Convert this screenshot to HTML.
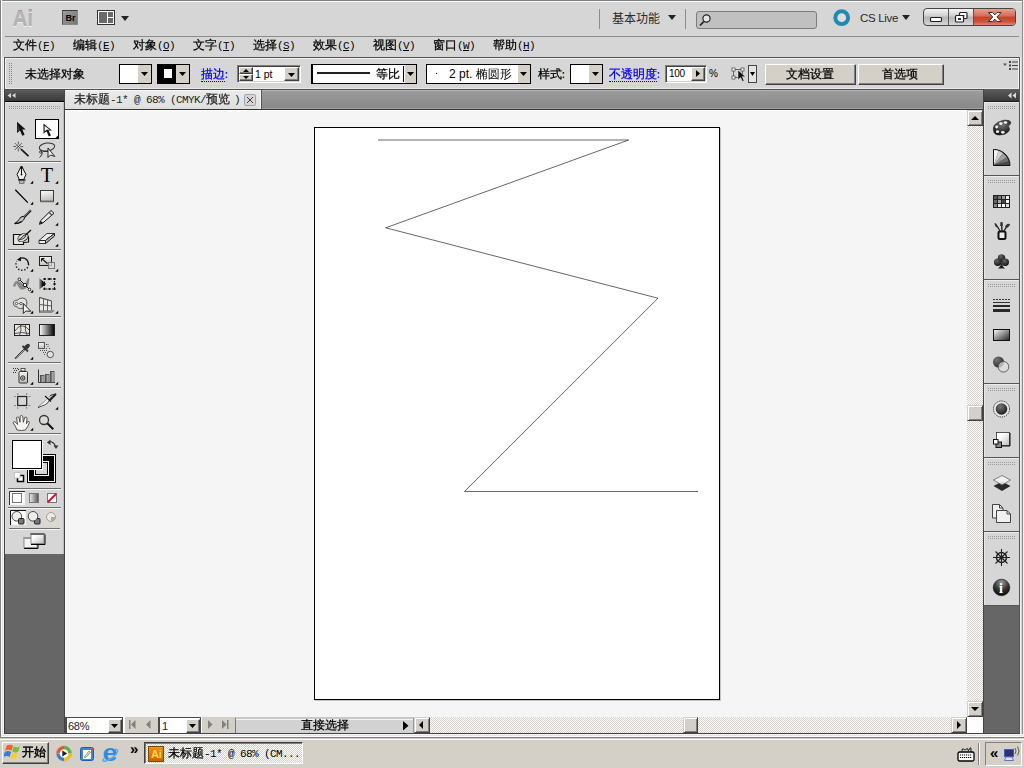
<!DOCTYPE html>
<html><head><meta charset="utf-8">
<style>
*{box-sizing:border-box;margin:0;padding:0}
html,body{width:1024px;height:768px;overflow:hidden}
body{position:relative;background:#d6d6d6;font-family:"Liberation Sans","WenQuanYi Zen Hei","Noto Sans CJK SC",sans-serif;font-size:12px;color:#000}
.a{position:absolute}
.t{position:absolute;white-space:nowrap;line-height:14px}
.cj{font-family:"Liberation Sans","WenQuanYi Zen Hei","Noto Sans CJK SC",sans-serif;font-size:12px}

.sbt{background-color:#fff;background-image:conic-gradient(#d4d0c8 25%,#fff 0 50%,#d4d0c8 0 75%,#fff 0);background-size:2px 2px}
.sbb{background:#d4d0c8;border:1px solid;border-color:#d4d0c8 #404040 #404040 #d4d0c8;box-shadow:inset 1px 1px 0 #fff,inset -1px -1px 0 #808080}

.s{font-family:"Liberation Mono","WenQuanYi Zen Hei","Noto Sans CJK SC",monospace;font-size:12px;line-height:14px;-webkit-text-stroke:0.25px}
.l{font-size:11px;letter-spacing:-0.6px;-webkit-text-stroke:0}
.u{text-decoration:underline}
.blue{color:#0000e0}.blue b{font-weight:normal;display:inline-block;line-height:12px;border-bottom:1px dotted #0000e0}.c{margin-left:-2px}
.sunk{border:1px solid;border-color:#808080 #fff #fff #808080;box-shadow:inset 1px 1px 0 #404040,inset -1px -1px 0 #d4d0c8;background:#fff}
.btn{background:#d4d0c8;border:1px solid;border-color:#fff #404040 #404040 #fff;box-shadow:inset -1px -1px 0 #808080}
</style></head><body>
<!-- window frame -->
<div class="a" style="left:0;top:0;width:1024px;height:2px;background:#fff;border-top:1px solid #808080"></div>
<div class="a" style="left:0;top:0;width:2px;height:737px;background:#fff;border-left:1px solid #808080"></div>
<div class="a" style="left:1022px;top:0;width:2px;height:737px;background:#f0f0f0;border-left:1px solid #8e8e8e"></div><div class="a" style="left:1020px;top:57px;width:1px;height:677px;background:#f0f0f0"></div>
<div class="a" style="left:5px;top:36px;width:1014px;height:1px;background:#8c8c8c"></div>
<div class="a" style="left:3px;top:57px;width:1px;height:677px;background:#f6f6f6"></div><div class="a" style="left:2px;top:57px;width:1px;height:680px;background:#dedede"></div>
<!-- app bar -->

<div class="t" style="left:13px;top:6.200px;font-size:22.500px;line-height:26px;font-weight:bold;color:#b4b4b4;letter-spacing:0.3px;transform:scaleX(.87);transform-origin:0 0;text-shadow:0 1px 0 #f0f0f0,0 -1px 0 #9a9a9a">Ai</div>
<div class="a" style="left:62px;top:10px;width:16px;height:15px;background:linear-gradient(135deg,#9c9c9c,#767676);border:1px solid #8a8a8a;border-top-color:#3c3c3c;border-left-color:#555"></div>
<div class="t" style="left:65.500px;top:12px;font-size:9px;line-height:13px;font-weight:bold;color:#000">Br</div>
<svg class="a" style="left:97px;top:10px" width="18" height="15"><rect x="0.5" y="0.5" width="17" height="14" fill="#fff" stroke="#333"/><rect x="2" y="2" width="8" height="11" fill="#6a6a6a"/><rect x="11" y="2" width="5" height="5" fill="#6a6a6a"/><rect x="11" y="8" width="5" height="5" fill="#6a6a6a"/></svg>
<svg class="a" style="left:120.500px;top:16px" width="8" height="5"><path d="M0 0h8l-4 5z" fill="#222"/></svg>
<div class="a" style="left:599px;top:9px;width:1px;height:20px;background:#8c8c8c"></div>
<div class="t" style="left:612px;top:11px;font-size:12px;line-height:16px;color:#2a2a2a;font-family:'Liberation Sans','Noto Sans CJK SC',sans-serif">基本功能</div>
<svg class="a" style="left:668px;top:15px" width="8" height="5"><path d="M0 0h8l-4 5z" fill="#222"/></svg>
<div class="a" style="left:685px;top:9px;width:1px;height:20px;background:#8c8c8c"></div>
<div class="a" style="left:696px;top:11px;width:121px;height:18px;background:#c0c0c0;border:1px solid #7c7c7c;border-radius:3px"></div>
<svg class="a" style="left:698px;top:12px" width="16" height="16"><circle cx="8.5" cy="6.5" r="3.6" fill="#e4e4e4" stroke="#222" stroke-width="1.2"/><path d="M5.8 9.5L2 13.5" stroke="#222" stroke-width="1.8"/></svg>
<svg class="a" style="left:833px;top:9px" width="18" height="18"><circle cx="8.7" cy="8.7" r="6.4" fill="#dedede" stroke="#1f8bb0" stroke-width="4"/></svg>
<div class="t" style="left:860px;top:9.700px;font-size:11.500px;line-height:16px;color:#2a2a2a;letter-spacing:-0.3px">CS Live</div>
<svg class="a" style="left:902px;top:15px" width="8" height="5"><path d="M0 0h8l-4 5z" fill="#222"/></svg>
<!-- window buttons -->
<div class="a" style="left:923px;top:8px;width:93px;height:18px;border:1px solid #444;border-radius:4px;background:linear-gradient(#f4f4f4,#cfcfcf 45%,#b4b4b4 50%,#d8d8d8);overflow:hidden">
 <div class="a" style="left:24px;top:0;width:1px;height:16px;background:#555"></div>
 <div class="a" style="left:49px;top:0;width:1px;height:16px;background:#555"></div>
 <div class="a" style="left:50px;top:0;width:42px;height:16px;background:linear-gradient(#e8a090,#d46a58 45%,#c4432c 50%,#d0503a 80%,#e08878)"></div>
 <svg class="a" style="left:0;top:0" width="91" height="16">
  <rect x="6.500" y="8.500" width="11" height="4" rx="1" fill="#fff" stroke="#222" stroke-width="1.200"/>
  <rect x="35.500" y="3.500" width="7.500" height="6" rx="1" fill="#fff" stroke="#222" stroke-width="1.200"/><rect x="38.500" y="6" width="2" height="1.500" fill="#333"/>
  <rect x="31.500" y="6.500" width="8" height="6.500" rx="1" fill="#fff" stroke="#222" stroke-width="1.200"/><rect x="34" y="9" width="3" height="2" fill="#333"/>
  <path d="M66 4.500l4.500 3.500l4.500-3.500h0l0 0M66 12.500l4.500-3.500l4.500 3.500" fill="none"/>
  <path d="M64.500 3.500h4l2.300 2.300l2.300-2.300h4l-4.200 4.500l4.200 4.500h-4l-2.300-2.300l-2.300 2.300h-4l4.200-4.500z" fill="#fff" stroke="#333" stroke-width="1"/>
 </svg>
</div>

<!-- menu -->
<div class="t s" style="left:13px;top:39px">文件<span class="l">(<span class="u">F</span>)</span></div>
<div class="t s" style="left:73px;top:39px">编辑<span class="l">(<span class="u">E</span>)</span></div>
<div class="t s" style="left:133px;top:39px">对象<span class="l">(<span class="u">O</span>)</span></div>
<div class="t s" style="left:193px;top:39px">文字<span class="l">(<span class="u">T</span>)</span></div>
<div class="t s" style="left:253px;top:39px">选择<span class="l">(<span class="u">S</span>)</span></div>
<div class="t s" style="left:313px;top:39px">效果<span class="l">(<span class="u">C</span>)</span></div>
<div class="t s" style="left:373px;top:39px">视图<span class="l">(<span class="u">V</span>)</span></div>
<div class="t s" style="left:433px;top:39px">窗口<span class="l">(<span class="u">W</span>)</span></div>
<div class="t s" style="left:493px;top:39px">帮助<span class="l">(<span class="u">H</span>)</span></div>

<!-- control bar -->
<div class="a" style="left:4px;top:57px;width:1016px;height:32px;border:1px solid #555;border-bottom:none;background:#d6d6d6;box-shadow:inset 1px 1px 0 #f2f2f2,inset -1px 0 0 #f2f2f2,inset 0 -1px 0 #e8e8e8"></div>

<div class="a" style="left:9px;top:63px;width:3px;height:21px;background-image:radial-gradient(circle at 0.5px 0.5px,#8a8a8a 0.6px,transparent 0.7px);background-size:2px 2px"></div>
<div class="t s" style="left:25px;top:68px">未选择对象</div>
<!-- fill -->
<div class="a" style="left:119px;top:64px;width:33px;height:20px;border:1px solid #000;background:#fff"></div>
<div class="a" style="left:138px;top:65px;width:13px;height:18px;background:#d4d0c8"></div>
<svg class="a" style="left:141px;top:72px" width="7" height="4"><path d="M0 0h7l-3.500 4z" fill="#000"/></svg>
<!-- stroke -->
<div class="a" style="left:157px;top:64px;width:33px;height:20px;border:1px solid #000;background:#000"></div>
<div class="a" style="left:164px;top:69px;width:8px;height:9px;background:#fff"></div>
<div class="a" style="left:176px;top:65px;width:13px;height:18px;background:#d4d0c8"></div>
<svg class="a" style="left:179px;top:72px" width="7" height="4"><path d="M0 0h7l-3.500 4z" fill="#000"/></svg>
<div class="t s blue" style="left:201px;top:68px"><b>描边</b><span class="l c">:</span></div>
<div class="a sunk" style="left:237px;top:65px;width:64px;height:18px"></div>
<div class="a btn" style="left:239px;top:67px;width:14px;height:7px"></div>
<div class="a btn" style="left:239px;top:74px;width:14px;height:7px"></div>
<svg class="a" style="left:243px;top:69px" width="6" height="3"><path d="M0 3h6l-3-3z" fill="#000"/></svg>
<svg class="a" style="left:243px;top:76px" width="6" height="3"><path d="M0 0h6l-3 3z" fill="#000"/></svg>
<div class="t" style="left:255px;top:67px;font-size:10.500px">1 pt</div>
<div class="a btn" style="left:284px;top:67px;width:15px;height:14px"></div>
<svg class="a" style="left:288px;top:73px" width="7" height="4"><path d="M0 0h7l-3.500 4z" fill="#000"/></svg>
<!-- profile -->
<div class="a" style="left:311px;top:64px;width:106px;height:20px;border:1px solid #000;border-left-width:2px;background:#fff"></div>
<div class="a" style="left:317px;top:72px;width:53px;height:2px;background:#222"></div>
<div class="t s" style="left:376px;top:68px">等比</div>
<div class="a" style="left:403px;top:66px;width:1px;height:16px;background:#000"></div>
<div class="a" style="left:405px;top:65px;width:11px;height:18px;background:#d4d0c8"></div>
<svg class="a" style="left:407px;top:72px" width="7" height="4"><path d="M0 0h7l-3.500 4z" fill="#000"/></svg>
<!-- brush -->
<div class="a" style="left:426px;top:64px;width:105px;height:20px;border:1px solid #000;background:#fff"></div>
<div class="a" style="left:436px;top:73px;width:1px;height:1px;background:#000"></div>
<div class="t" style="left:449px;top:67px;font-size:12px;font-family:'Liberation Sans','WenQuanYi Zen Hei',sans-serif">2 pt. 椭圆形</div>
<div class="a" style="left:518px;top:65px;width:12px;height:18px;background:#d4d0c8"></div>
<svg class="a" style="left:520px;top:72px" width="7" height="4"><path d="M0 0h7l-3.500 4z" fill="#000"/></svg>
<div class="t s" style="left:538px;top:68px">样式<span class="l c">:</span></div>
<div class="a" style="left:570px;top:64px;width:33px;height:20px;border:1px solid #000;background:#fff"></div>
<div class="a" style="left:589px;top:65px;width:13px;height:18px;background:#d4d0c8"></div>
<svg class="a" style="left:592px;top:72px" width="7" height="4"><path d="M0 0h7l-3.500 4z" fill="#000"/></svg>
<div class="t s blue" style="left:609px;top:68px"><b>不透明度</b><span class="l c">:</span></div>
<div class="a sunk" style="left:665px;top:65px;width:42px;height:18px"></div>
<div class="t" style="left:669px;top:67px;font-size:10px;letter-spacing:-0.3px">100</div>
<div class="a btn" style="left:691px;top:67px;width:14px;height:14px"></div>
<svg class="a" style="left:696px;top:70px" width="4" height="7"><path d="M0 0v7l4-3.500z" fill="#000"/></svg>
<div class="t" style="left:709px;top:67px;font-size:10px">%</div>
<svg class="a" style="left:730px;top:65px" width="18" height="18"><rect x="3.500" y="4.500" width="9" height="8" fill="none" stroke="#666"/><g fill="#fff" stroke="#555" stroke-width="0.8"><rect x="2" y="3" width="3" height="3"/><rect x="11" y="3" width="3" height="3"/><rect x="2" y="11" width="3" height="3"/></g><path d="M8 5v10l2.500-2.500l2 4l1.600-0.800l-2-4h3.400z" fill="#111" stroke="#eee" stroke-width="0.5"/></svg>
<div class="a" style="left:748px;top:65px;width:9px;height:18px;border:1px solid #444;background:#e4e4e4"></div>
<svg class="a" style="left:750px;top:72px" width="5" height="4"><path d="M0 0h5l-2.500 4z" fill="#000"/></svg>
<div class="a btn" style="left:765px;top:64px;width:91px;height:21px"></div>
<div class="t s" style="left:786px;top:68px">文档设置</div>
<div class="a btn" style="left:858px;top:64px;width:86px;height:21px"></div>
<div class="t s" style="left:882px;top:68px">首选项</div>
<svg class="a" style="left:1003px;top:61px" width="15" height="9"><path d="M0 2.500h4l-2 2.500z" fill="#555"/><g fill="#444"><rect x="6" y="0" width="2" height="2"/><rect x="9" y="0.500" width="6" height="1"/><rect x="6" y="3.500" width="2" height="2"/><rect x="9" y="4" width="6" height="1"/><rect x="6" y="7" width="2" height="2"/><rect x="9" y="7.500" width="6" height="1"/></g></svg>

<!-- workspace dark bg -->
<div class="a" style="left:4px;top:89px;width:1016px;height:645px;background:#666"></div>
<!-- tool panel -->
<!--TOOLS--><svg class="a" style="left:0;top:0" width="70" height="740" viewBox="0 0 70 740"><defs>
<linearGradient id="hd" x1="0" y1="0" x2="0" y2="1"><stop offset="0" stop-color="#5e5e5e"/><stop offset="1" stop-color="#3a3a3a"/></linearGradient>
<linearGradient id="rg" x1="0" y1="0" x2="0.300" y2="1"><stop offset="0" stop-color="#fff"/><stop offset="1" stop-color="#c4c2bc"/></linearGradient>
<linearGradient id="bw" x1="0" y1="0" x2="1" y2="0"><stop offset="0" stop-color="#fff"/><stop offset="1" stop-color="#000"/></linearGradient>
<linearGradient id="wg" x1="0" y1="0" x2="1" y2="0"><stop offset="0" stop-color="#eee"/><stop offset="1" stop-color="#555"/></linearGradient>
<linearGradient id="gb" x1="0" y1="0" x2="1" y2="0"><stop offset="0" stop-color="#555"/><stop offset="1" stop-color="#ddd"/></linearGradient>
<linearGradient id="ag" x1="0" y1="0" x2="1" y2="0"><stop offset="0" stop-color="#999"/><stop offset=".5" stop-color="#111"/></linearGradient>
<pattern id="dots" x="9" y="106" width="2" height="2" patternUnits="userSpaceOnUse"><rect x="0" y="0" width="1" height="1" fill="#9a9a9a"/></pattern>
</defs>
<rect x="4" y="89" width="1" height="645" fill="#3c3c3c"/>
<rect x="5" y="89" width="59" height="12" fill="url(#hd)"/><rect x="5" y="101" width="59" height="1" fill="#000"/>
<rect x="5" y="102" width="59" height="452" fill="#d6d6d6"/><rect x="5" y="102" width="59" height="1" fill="#e6e6e6"/><rect x="5" y="102" width="1" height="452" fill="#e2e2e2"/><rect x="63" y="102" width="1" height="452" fill="#bdbdbd"/>
<rect x="64" y="89" width="1" height="645" fill="#444"/>
<path d="M11 93v5l-3.500-2.500zM15.500 93v5l-3.500-2.500z" fill="#d8d8d8"/>
<rect x="9" y="106" width="52" height="4" fill="url(#dots)"/>
<path d="M17 121.800V133l3-2.600l2.300 5.400l2.300-1l-2.300-5.300h3.400z" fill="#111"/><path d="M17.600 123.500v8l2-1.800z" fill="#666" opacity=".6"/>
<rect x="35.500" y="119.500" width="23" height="19" fill="#fff" stroke="#000"/><path d="M58 135.500v2.500h-2.500z" fill="#000"/>
<path d="M43.500 123.400V133.800l3-2.600l2.300 5.300l2.100-0.900l-2.300-5.200h3.400z" fill="#111"/><path d="M44.600 125.800v5.600l1.900-1.700h3.300z" fill="#f4f2ee"/>
<g stroke="#555" stroke-width="0.9"><path d="M18.300 141.500v10M13.300 146.500h10M14.800 143l7 7M21.800 143l-7 7"/></g><circle cx="18.300" cy="146.500" r="2.300" fill="#eee" stroke="#777" stroke-width=".5"/><path d="M17 145.200l2.600 2.600M19.600 145.200l-2.600 2.600" stroke="#111" stroke-width=".9"/><path d="M21 149.200l7.500 7" stroke="#111" stroke-width="1.600"/>
<ellipse cx="47" cy="147" rx="7.800" ry="4" fill="none" stroke="#333" stroke-width="1" transform="rotate(-8 47 147)"/><path d="M40 150.500q3 1 2 3.500t-2.500 3.500" fill="none" stroke="#333" stroke-width="1"/><circle cx="40.800" cy="152" r="1.300" fill="none" stroke="#333" stroke-width=".8"/><path d="M43 151.500h5" stroke="#333" stroke-width="1"/><path d="M48 148v9.500l2.500-2.500l4.300 1.500z" fill="#f4f2ee" stroke="#111" stroke-width=".9"/>
<rect x="8" y="161" width="53" height="1" fill="#6e6e6e"/><rect x="8" y="162" width="53" height="1" fill="#f4f4f4"/>
<path d="M21.500 166l4.500 8.500l-2.300 5h-4.400l-2.300-5z" fill="#f0eeea" stroke="#111" stroke-width="1"/><path d="M21.500 166.500v7.500" stroke="#111" stroke-width="1"/><path d="M20.500 166.500h2l.8 2h-3.600z" fill="#111"/><circle cx="21.500" cy="174.500" r=".9" fill="#111"/><rect x="18" y="179.300" width="7.500" height="1.300" fill="#111"/><rect x="19.300" y="180.600" width="4.700" height="2.600" fill="#bbb" stroke="#333" stroke-width=".6"/><path d="M33.2 180.8v3h-3z" fill="#000"/>
<text x="40.800" y="181.800" font-family="Liberation Serif,serif" font-size="20" fill="#000" textLength="12.300" lengthAdjust="spacingAndGlyphs">T</text><path d="M58.2 180.8v3h-3z" fill="#000"/>
<path d="M15.300 189.800l12.500 12.800" stroke="#000" stroke-width="1.300"/><path d="M33.2 201.8v3h-3z" fill="#000"/>
<rect x="40.500" y="190.500" width="13" height="10.700" fill="url(#rg)" stroke="#3a3a3a"/><rect x="40" y="202" width="14" height="1" fill="#aaa" opacity=".6"/><path d="M58.2 201.8v3h-3z" fill="#000"/>
<path d="M30.800 210.200l-7.800 8" stroke="#111" stroke-width="2.300"/><path d="M30.300 210.200l-7.300 7.500" stroke="#e8e8e8" stroke-width=".7"/><path d="M23.300 216.300q2.700 2-1.300 5.200q-3.500 2.500-7.500 2q3-1.500 4.500-4q2-3.500 4.300-3.200z" fill="#c4c4c4" stroke="#111" stroke-width="1"/><path d="M21.500 221.500q-3 2.200-6.500 2" stroke="#111" stroke-width="1.300" fill="none"/>
<path d="M51 210.500l3 2.800l-11 9.500l-3.500 1.500l1-3.500z" fill="#eeece8" stroke="#111" stroke-width="1"/><path d="M49 212.300l3 3" stroke="#555" stroke-width="1.500"/><path d="M39.500 224.300l1-3.500l2.500 2z" fill="#222"/><path d="M58.2 222.8v3h-3z" fill="#000"/>
<path d="M13.500 234.500h9l6 2.500v5l-5 .5v2h-10z" fill="#e8e6e2" stroke="#111" stroke-width="1.200"/><ellipse cx="23" cy="237.500" rx="5.500" ry="3.500" fill="#e2e0dc" stroke="#222" stroke-width=".9" transform="rotate(-30 23 237.500)"/><path d="M31 230l-6 5.500" stroke="#111" stroke-width="1.300"/><path d="M25.500 235q1.500 1.500-2 3.500q-2.500 1.500-4.500 1q2-1 3.200-2.800q1.500-2 3.300-1.700z" fill="#aaa" stroke="#222" stroke-width=".8"/>
<path d="M47 233.500h7.500l-9 7h-6.500zM39 240.500h6.500v3h-6.500zM45.500 240.500l9-7v2.500l-9 7.500z" fill="#f0eeea" stroke="#222" stroke-width=".9" stroke-linejoin="round"/><path d="M45.500 240.500l9-7v2.500l-9 7.500z" fill="#bbb" stroke="#222" stroke-width=".9"/><path d="M58.2 243.8v3h-3z" fill="#000"/>
<rect x="8" y="249" width="53" height="1" fill="#6e6e6e"/><rect x="8" y="250" width="53" height="1" fill="#f4f4f4"/>
<path d="M19.500 258.500a6.300 6.300 0 0 1 9 5.500" fill="none" stroke="#111" stroke-width="1.300"/><path d="M28.500 264a6.300 6.300 0 1 1-11.800-3" fill="none" stroke="#111" stroke-width="1.500" stroke-dasharray="1.300 1.900"/><path d="M16.800 259.800l4.200-2.800v4.200z" fill="#111"/><path d="M33.2 268.8v3h-3z" fill="#000"/>
<rect x="39.500" y="256.500" width="12" height="9" fill="url(#rg)" stroke="#222"/><rect x="48.500" y="262.500" width="6" height="6" fill="#ddd" fill-opacity=".7" stroke="#777"/><path d="M41.500 258.500l6 5M41.500 258.500h3M41.500 258.500v3" stroke="#111" stroke-width="1.100" fill="none"/><path d="M58.2 268.8v3h-3z" fill="#000"/>
<path d="M13.500 286q1-6 5-4.500t5 4t4-6q1.500-2 1.500-.5q-.5 9-5 10t-6-3.500t-3 1z" fill="#888" stroke="#777" stroke-width=".5"/><path d="M19.500 279.500l11 11" stroke="#111" stroke-width="1"/><circle cx="19.300" cy="279.300" r="1.300" fill="#eee" stroke="#111" stroke-width=".8"/><circle cx="25" cy="285" r="1.700" fill="#fff" stroke="#111" stroke-width=".9"/><circle cx="29.500" cy="289.500" r="1.300" fill="#eee" stroke="#111" stroke-width=".8"/><path d="M33.2 289.8v3h-3z" fill="#000"/>
<path d="M39.200 278v11.500l7-5.500z" fill="url(#ag)"/><rect x="44.500" y="279" width="10" height="10" fill="none" stroke="#111" stroke-width="1" stroke-dasharray="1.500 1.500"/><g fill="#111"><rect x="43.500" y="278" width="2" height="2"/><rect x="48.500" y="278" width="2" height="2"/><rect x="53.500" y="278" width="2" height="2"/><rect x="53.500" y="283" width="2" height="2"/><rect x="43.500" y="288" width="2" height="2"/><rect x="48.500" y="288" width="2" height="2"/><rect x="53.500" y="288" width="2" height="2"/></g>
<path d="M13.300 303.500q0-3.500 4.500-3.500q1.500-2.300 5-2t4 3.500q.5 3-1 5t-5.500 2q-2 0-3-1.500q-4-.5-4-3.500z" fill="#e4e2de" stroke="#555" stroke-width="1"/><circle cx="16.500" cy="303.500" r="1.200" fill="#fff" stroke="#222" stroke-width=".7"/><circle cx="21" cy="303.500" r="1.200" fill="#fff" stroke="#222" stroke-width=".7"/><path d="M17.700 303.500h2" stroke="#222" stroke-width=".7" stroke-dasharray=".7 .7"/><path d="M23.300 303.500v10l2.500-2.500l5 .3z" fill="#f6f4f0" stroke="#111" stroke-width=".9"/><path d="M33.2 310.8v3h-3z" fill="#000"/>
<path d="M39.500 297v15.500M39.500 297.500l12 3.500v9M43.500 298.500v12.500M47.500 300v11M39.500 304.500l12 1.500M39.500 311l14 0" fill="none" stroke="#555" stroke-width="1"/><path d="M40 298l11 3.300v9.200l-11 .3z" fill="#efede9" opacity=".8"/><path d="M39.500 297v15.500M43.500 298.500v12.500M47.500 300v11M39.500 304.500l12 1.500M39.500 297.500l12 3.500v9" fill="none" stroke="#555" stroke-width=".9"/><path d="M39.500 311h15M39.500 312.500h13" stroke="#777" stroke-width=".8"/><path d="M58.2 310.8v3h-3z" fill="#000"/>
<rect x="8" y="316" width="53" height="1" fill="#6e6e6e"/><rect x="8" y="317" width="53" height="1" fill="#f4f4f4"/>
<rect x="14.500" y="324.500" width="15" height="11" fill="#e8e6e0" stroke="#222"/><path d="M15 331q4-6 8-5t6 4M20.500 325q1.500 5-1 10.500M25.500 325q-1 5 1.500 10M15 333.500q6-2 14 0" fill="none" stroke="#333" stroke-width=".8"/>
<rect x="39.500" y="324.500" width="15" height="11" fill="url(#bw)" stroke="#222"/>
<path d="M26.500 344.500q2-1.500 3 0t-.5 3l-2 2l-3-3z" fill="#333"/><path d="M22.500 346l5.500 5.500" stroke="#333" stroke-width="1.800"/><path d="M24 349l-7.500 7.500l-1.500 2l2-1l7.800-7.500z" fill="#e8e6e2" stroke="#222" stroke-width=".9"/><path d="M33.2 356.8v3h-3z" fill="#000"/>
<rect x="38.500" y="342.500" width="6" height="6" fill="url(#rg)" stroke="#555"/><circle cx="50.300" cy="354.500" r="3.200" fill="#e4e2de" stroke="#444" stroke-width=".9"/><g fill="#555"><rect x="46" y="344" width="1" height="1"/><rect x="47.500" y="346" width="1" height="1"/><rect x="46" y="348" width="1" height="1"/><rect x="49" y="348" width="1" height="1"/><rect x="44" y="350" width="1" height="1"/><rect x="46" y="350" width="1" height="1"/><rect x="40" y="350" width="1" height="1"/><rect x="42" y="350" width="1" height="1"/><rect x="43" y="352" width="1" height="1"/><rect x="45" y="352" width="1" height="1"/><rect x="44" y="354" width="1" height="1"/><rect x="47.500" y="344" width="1" height="1"/></g>
<rect x="8" y="362" width="53" height="1" fill="#6e6e6e"/><rect x="8" y="363" width="53" height="1" fill="#f4f4f4"/>
<rect x="19" y="371.500" width="8.500" height="11.500" rx="1" fill="url(#rg)" stroke="#333" stroke-width="1"/><rect x="21" y="368.500" width="4" height="2.500" fill="#eee" stroke="#333" stroke-width=".8"/><circle cx="22.700" cy="378" r="2.200" fill="#ccc" stroke="#222" stroke-width=".9"/><circle cx="22.700" cy="378" r=".8" fill="#222"/><g fill="#333"><rect x="13" y="368" width="1" height="1"/><rect x="15" y="368" width="1" height="1"/><rect x="14" y="370" width="1" height="1"/><rect x="16" y="370" width="1" height="1"/><rect x="18" y="369" width="1" height="1"/><rect x="13" y="372" width="1" height="1"/><rect x="15" y="372" width="1" height="1"/><rect x="17" y="368" width="1" height="1"/></g><path d="M33.2 381.8v3h-3z" fill="#000"/>
<path d="M38.500 369.500v13h16.500" fill="none" stroke="#333" stroke-width="1"/><rect x="40.500" y="375.500" width="3.500" height="7" fill="url(#gb)" stroke="#444" stroke-width=".8"/><rect x="45.500" y="374.500" width="3.500" height="8" fill="url(#gb)" stroke="#444" stroke-width=".8"/><rect x="50.500" y="371.500" width="3.500" height="11" fill="url(#gb)" stroke="#444" stroke-width=".8"/><path d="M58.2 381.8v3h-3z" fill="#000"/>
<rect x="8" y="387" width="53" height="1" fill="#6e6e6e"/><rect x="8" y="388" width="53" height="1" fill="#f4f4f4"/>
<rect x="17.700" y="396.500" width="9" height="9" fill="none" stroke="#222" stroke-width="1.200"/><path d="M17.700 393v2M26.700 393v2M17.700 407v2M26.700 407v2M14 396.500h2M14 405.500h2M28.500 396.500h2M28.500 405.500h2" stroke="#888" stroke-width="1"/>
<path d="M56 394l-5 1l-6.500 6.500l-6.500 6l7.500-3l3-2.500l1-2.500z" fill="#bbb" stroke="#222" stroke-width=".9"/><path d="M50 395.500l-5.500 6l-6 5.500l7-3l2.500-2.500z" fill="#f4f2ee"/><path d="M45 396l6 5.500" stroke="#111" stroke-width="1.100"/><path d="M56 394l-6.500 6.500" stroke="#222" stroke-width="2"/><path d="M58.2 406.8v3h-3z" fill="#000"/>
<path d="M17 430q-1.500-4-4-7.500q1-1.800 3 0l1.500 2l-1-7q1.500-1.500 2.500.3l1 4.500l.2-6.300q1.700-1.200 2.600.3l.5 6l1.500-5q1.800-.8 2.300.8l-.7 5.700l1.500-2.500q1.600-.2 1.500 1.300q-1.500 4.500-4 7.400q-4 1-8.400 0z" fill="#f6f4f0" stroke="#444" stroke-width=".9"/><path d="M33.2 427.8v3h-3z" fill="#000"/>
<circle cx="44" cy="420" r="4.500" fill="#dcdad6" stroke="#333" stroke-width="1.300"/><path d="M47.300 423.300l6 6" stroke="#111" stroke-width="2"/>
<rect x="8" y="433" width="53" height="1" fill="#6e6e6e"/><rect x="8" y="434" width="53" height="1" fill="#f4f4f4"/>
<rect x="27" y="454" width="29" height="29" fill="#000"/><rect x="28.500" y="455.500" width="26" height="26" fill="none" stroke="#fff"/><rect x="34.500" y="461.500" width="14" height="14" fill="#d6d6d6" stroke="#fff"/><rect x="35.500" y="462.500" width="12" height="12" fill="none" stroke="#000"/>
<rect x="13" y="441" width="30" height="29" fill="#fff"/><rect x="12.500" y="440.500" width="29" height="28" fill="#fff" stroke="#000"/>
<path d="M49 441.500q5 0 6.500 5" fill="none" stroke="#333" stroke-width="1.200"/><path d="M47 442.500l3.500-3v5.500zM53.500 445.500h5l-2.500 3.500z" fill="#333"/>
<rect x="17.500" y="475.500" width="6" height="6" fill="#fff" stroke="#000" stroke-width="1.500"/><rect x="14.500" y="472.500" width="5.500" height="5.500" fill="#fff" stroke="#bbb" stroke-width=".8"/>
<rect x="8" y="488" width="53" height="1" fill="#6e6e6e"/><rect x="8" y="489" width="53" height="1" fill="#f4f4f4"/>
<rect x="9" y="491" width="16" height="14" fill="#fff"/><path d="M9.500 505v-13.500h15.500" fill="none" stroke="#333"/><path d="M10 504.500h14.500v-12.500" fill="none" stroke="#f4f4f4"/><rect x="12.500" y="493.500" width="9" height="9" fill="#fff" stroke="#777"/>
<rect x="29.500" y="493.500" width="9" height="9" fill="url(#wg)" stroke="#777"/>
<rect x="47.500" y="493.500" width="9" height="9" fill="#fff" stroke="#777"/><path d="M48 502l8-8" stroke="#e00020" stroke-width="1.800"/>
<rect x="8" y="507" width="53" height="1" fill="#6e6e6e"/><rect x="8" y="508" width="53" height="1" fill="#f4f4f4"/>
<rect x="42" y="509" width="18" height="18" fill="#dcd8d0"/>
<rect x="10" y="510" width="16" height="15" fill="#fff"/><path d="M10.500 525v-14.500h15.500" fill="none" stroke="#111"/><path d="M11 524.500h14.500v-13.500" fill="none" stroke="#f4f4f4"/><circle cx="16.800" cy="516.300" r="4.800" fill="#f0eeea" stroke="#333" stroke-width=".9"/><rect x="18.500" y="518.500" width="5.500" height="5.500" rx="1" fill="#777" stroke="#222"/>
<rect x="34.500" y="518.500" width="5.500" height="5.500" rx="1" fill="#777" stroke="#222"/><circle cx="33" cy="516.300" r="4.800" fill="#f0eeea" stroke="#333" stroke-width=".9"/>
<circle cx="51" cy="517" r="4.500" fill="#eceae6" stroke="#999" stroke-width=".9"/><path d="M51 517h4.500a4.500 4.500 0 0 1-4.500 4.500z" fill="#aaa"/>
<rect x="9" y="528" width="51" height="1" fill="#6e6e6e"/><rect x="9" y="529" width="51" height="1" fill="#f4f4f4"/>
<g transform="translate(-0.5,-1)"><rect x="24.500" y="538.500" width="13" height="10" fill="#f4f4f4" stroke="#777" stroke-width=".8"/><rect x="24" y="538" width="14" height="2" fill="#999"/><path d="M24.500 549.500h14v-5" fill="none" stroke="#000" stroke-width="1"/><rect x="31.500" y="534.500" width="13" height="10" fill="url(#gs)" stroke="#777" stroke-width=".8"/><rect x="31" y="534" width="14" height="2" fill="#666"/><path d="M31.500 545.500h14v-10" fill="none" stroke="#000" stroke-width="1"/></g>
</svg><!--/TOOLS-->
<!-- doc -->

<div class="a" style="left:4px;top:89px;width:1016px;height:1px;background:#4e4e4e"></div>
<div class="a" style="left:65px;top:90px;width:918px;height:19px;background:linear-gradient(#9d9d9d,#878787);box-shadow:inset 0 1px 0 #b2b2b2,inset 0 -1px 0 #a0a0a0"></div>
<div class="a" style="left:65px;top:109px;width:918px;height:1px;background:#363636"></div>
<div class="a" style="left:65px;top:90px;width:197px;height:19px;background:linear-gradient(#ebebeb,#dedede);border-right:1px solid #555;box-shadow:inset 0 1px 0 #f8f8f8,inset -1px 0 0 #f8f8f8"></div>
<div class="t s" style="left:74px;top:93px;color:#222">未标题<span class="l">-1* @ 68% (CMYK/</span>预览<span class="l" style="margin-left:4px">)</span></div>
<svg class="a" style="left:244px;top:94px" width="12" height="12"><rect x="0.5" y="0.5" width="11" height="11" rx="1.500" fill="#d6d6d6" stroke="#a4a4a4"/><path d="M3 3l6 6M9 3l-6 6" stroke="#444" stroke-width="1"/></svg>
<!-- canvas -->
<div class="a" style="left:65px;top:110px;width:902px;height:607px;background:#f5f5f5;border-top:1px solid #fff"></div>
<div class="a" style="left:315px;top:128px;width:406px;height:573px;background:#c4c4c4"></div>
<div class="a" style="left:314px;top:127px;width:406px;height:573px;background:#fff;border:1px solid #000"></div>
<svg class="a" style="left:314px;top:127px" width="406" height="573"><path d="M64 13H314.700L71.700 100.800L344 171.200L150.500 364.500H384" fill="none" stroke="#333" stroke-width="0.75"/></svg>
<!-- v scrollbar -->
<div class="a sbt" style="left:967px;top:110px;width:16px;height:607px"></div>
<div class="a sbb" style="left:967px;top:110px;width:16px;height:16px"></div>
<svg class="a" style="left:971px;top:116px" width="8" height="4"><path d="M0 4h8l-4-4z" fill="#000"/></svg>
<div class="a sbb" style="left:967px;top:701px;width:16px;height:16px"></div>
<svg class="a" style="left:971px;top:707px" width="8" height="4"><path d="M0 0h8l-4 4z" fill="#000"/></svg>
<div class="a sbb" style="left:967px;top:405px;width:16px;height:16px"></div>
<!-- status / h scrollbar -->
<div class="a" style="left:65px;top:717px;width:918px;height:17px;background:#d6d6d6"></div>
<div class="a sbt" style="left:414px;top:717px;width:553px;height:17px"></div>
<div class="a" style="left:967px;top:717px;width:16px;height:17px;background:#fff"></div>

<div class="a" style="left:123px;top:717px;width:112px;height:17px;background:#d4d0c8"></div><div class="a" style="left:123px;top:717px;width:2px;height:16px;background:#fff"></div><div class="a" style="left:201px;top:717px;width:1px;height:16px;background:#fff"></div>
<div class="a" style="left:65px;top:717px;width:58px;height:16px;background:#fff;border:1px solid #4a4a4a;border-left-width:2px;border-bottom:none"></div>
<div class="a btn" style="left:108px;top:719px;width:14px;height:14px"></div>
<svg class="a" style="left:111px;top:724px" width="7" height="4"><path d="M0 0h7l-3.500 4z" fill="#000"/></svg>
<div class="t" style="left:68px;top:719px;font-size:11px;letter-spacing:-0.3px;color:#123">68%</div>
<svg class="a" style="left:128px;top:720px" width="104" height="10"><g fill="#808080"><rect x="1" y="0" width="1.500" height="9"/><path d="M7.500 0v9l-4.500-4.500z"/><path d="M22.500 0v9l-4.500-4.500z"/><path d="M80 0v9l4.500-4.500z"/><path d="M94 0v9l4.500-4.500z"/><rect x="99" y="0" width="1.500" height="9"/></g></svg>
<div class="a" style="left:158px;top:717px;width:43px;height:16px;background:#fff;border:1px solid #4a4a4a;border-left-width:2px;border-bottom:none"></div>
<div class="a btn" style="left:186px;top:719px;width:14px;height:14px"></div>
<svg class="a" style="left:189px;top:724px" width="7" height="4"><path d="M0 0h7l-3.500 4z" fill="#000"/></svg>
<div class="t" style="left:162px;top:719px;font-size:11px;color:#123">1</div>
<div class="a" style="left:235px;top:717px;width:179px;height:16px;background:#d2d2d2;border-left:1px solid #777;border-right:1px solid #999;border-top:2px solid #c8c8c8;box-shadow:inset 0 1px 0 #f4f4f4"></div>
<div class="t s" style="left:301px;top:719px">直接选择</div>
<svg class="a" style="left:403px;top:721px" width="6" height="10"><path d="M0 0v9.500l5.500-4.750z" fill="#000"/></svg>
<div class="a sbb" style="left:414px;top:717px;width:16px;height:16px"></div>
<svg class="a" style="left:419px;top:721px" width="4" height="8"><path d="M4 0v8l-4-4z" fill="#000"/></svg>
<div class="a sbb" style="left:683px;top:717px;width:15px;height:16px"></div>
<div class="a sbb" style="left:951px;top:717px;width:16px;height:16px"></div>
<svg class="a" style="left:957px;top:721px" width="4" height="8"><path d="M0 0v8l4-4z" fill="#000"/></svg>


<!-- right dock -->
<!--DOCK--><svg class="a" style="left:960px;top:0" width="64" height="740" viewBox="960 0 64 740"><defs>
<linearGradient id="hd2" x1="0" y1="0" x2="0" y2="1"><stop offset="0" stop-color="#5e5e5e"/><stop offset="1" stop-color="#3a3a3a"/></linearGradient>
<pattern id="dots2" x="988" y="106" width="2" height="2" patternUnits="userSpaceOnUse"><rect x="0" y="0" width="1" height="1" fill="#9a9a9a"/></pattern>
<radialGradient id="pal" cx=".5" cy=".3" r=".7"><stop offset="0" stop-color="#777"/><stop offset="1" stop-color="#111"/></radialGradient>
<radialGradient id="clb" cx=".4" cy=".3" r=".7"><stop offset="0" stop-color="#666"/><stop offset="1" stop-color="#111"/></radialGradient>
<linearGradient id="gd2" x1="0" y1="0" x2="1" y2="1"><stop offset="0" stop-color="#fff"/><stop offset="1" stop-color="#222"/></linearGradient>
<radialGradient id="tr1" cx=".35" cy=".3" r=".8"><stop offset="0" stop-color="#777"/><stop offset="1" stop-color="#222"/></radialGradient>
<radialGradient id="ap" cx=".4" cy=".3" r=".8"><stop offset="0" stop-color="#777"/><stop offset="1" stop-color="#111"/></radialGradient>
<linearGradient id="gs" x1="0" y1="0" x2="1" y2="1"><stop offset="0.300" stop-color="#fff"/><stop offset="1" stop-color="#bbb"/></linearGradient>
<radialGradient id="inf" cx=".5" cy=".2" r=".9"><stop offset="0" stop-color="#999"/><stop offset=".5" stop-color="#333"/><stop offset="1" stop-color="#000"/></radialGradient>
</defs>
<rect x="983" y="89" width="1" height="645" fill="#444"/>
<rect x="984" y="89" width="35" height="12" fill="url(#hd2)"/><rect x="984" y="101" width="35" height="1" fill="#1c1c1c"/>
<path d="M1011.500 92.500v6l-3.500-3zM1016 92.500v6l-3.500-3z" fill="#dcdcdc"/>
<rect x="1019" y="57" width="1" height="677" fill="#555"/>
<rect x="984" y="102" width="35" height="73" fill="#d6d6d6"/><rect x="984" y="102" width="35" height="1" fill="#ececec"/><rect x="984" y="102" width="1" height="73" fill="#e8e8e8"/><rect x="984" y="175" width="35" height="1" fill="#555"/>
<rect x="988" y="106" width="28" height="4" fill="url(#dots2)"/>
<rect x="984" y="176" width="35" height="103" fill="#d6d6d6"/><rect x="984" y="176" width="35" height="1" fill="#ececec"/><rect x="984" y="176" width="1" height="103" fill="#e8e8e8"/><rect x="984" y="279" width="35" height="1" fill="#555"/>
<rect x="988" y="180" width="28" height="4" fill="url(#dots2)"/>
<rect x="984" y="280" width="35" height="103" fill="#d6d6d6"/><rect x="984" y="280" width="35" height="1" fill="#ececec"/><rect x="984" y="280" width="1" height="103" fill="#e8e8e8"/><rect x="984" y="383" width="35" height="1" fill="#555"/>
<rect x="988" y="284" width="28" height="4" fill="url(#dots2)"/>
<rect x="984" y="384" width="35" height="73" fill="#d6d6d6"/><rect x="984" y="384" width="35" height="1" fill="#ececec"/><rect x="984" y="384" width="1" height="73" fill="#e8e8e8"/><rect x="984" y="457" width="35" height="1" fill="#555"/>
<rect x="988" y="388" width="28" height="4" fill="url(#dots2)"/>
<rect x="984" y="458" width="35" height="73" fill="#d6d6d6"/><rect x="984" y="458" width="35" height="1" fill="#ececec"/><rect x="984" y="458" width="1" height="73" fill="#e8e8e8"/><rect x="984" y="531" width="35" height="1" fill="#555"/>
<rect x="988" y="462" width="28" height="4" fill="url(#dots2)"/>
<rect x="984" y="532" width="35" height="73" fill="#d6d6d6"/><rect x="984" y="532" width="35" height="1" fill="#ececec"/><rect x="984" y="532" width="1" height="73" fill="#e8e8e8"/><rect x="984" y="605" width="35" height="1" fill="#555"/>
<rect x="988" y="536" width="28" height="4" fill="url(#dots2)"/>
<path d="M993.500 130q-1-5 5-8t10.500-1.500q3 1.500 1 4q-2.500 1.500-1 3t-.5 4q-3 3.500-9 3.500t-6-5z" fill="url(#pal)" stroke="#222" stroke-width=".6"/><g fill="#f2f2f2"><ellipse cx="1000.800" cy="123.600" rx="1.700" ry="1.300"/><ellipse cx="1005.500" cy="122.500" rx="1.700" ry="1.300"/><ellipse cx="996.700" cy="127" rx="1.500" ry="1.400"/><ellipse cx="997.500" cy="131.700" rx="1.600" ry="1.400"/><ellipse cx="1002.800" cy="132.300" rx="1.800" ry="1.400"/></g>
<path d="M993.500 149.500a16 16 0 0 1 16.500 16h-16.500z" fill="#333" stroke="#111" stroke-width="1"/><path d="M994 165v-15a15 15 0 0 1 4.500 .8z" fill="#f4f4f4"/><path d="M994 165l4.500-14.200a15 15 0 0 1 4.500 2.500z" fill="#d0d0d0"/><path d="M994 165l9-11.700a15 15 0 0 1 3.800 4.200z" fill="#a0a0a0"/><path d="M994 165l12.800-7.500a15 15 0 0 1 2 4z" fill="#707070"/><path d="M994 165l14.800-3.500a15 15 0 0 1 .5 3.500z" fill="#484848"/>
<rect x="993" y="195" width="17" height="13" fill="#222"/>
<rect x="994" y="196" width="3" height="3" fill="#555"/>
<rect x="998" y="196" width="3" height="3" fill="#777"/>
<rect x="1002" y="196" width="3" height="3" fill="#999"/>
<rect x="1006" y="196" width="3" height="3" fill="#eee"/>
<rect x="994" y="200" width="3" height="3" fill="#666"/>
<rect x="998" y="200" width="3" height="3" fill="#aaa"/>
<rect x="1002" y="200" width="3" height="3" fill="#444"/>
<rect x="1006" y="200" width="3" height="3" fill="#fff"/>
<rect x="994" y="204" width="3" height="3" fill="#888"/>
<rect x="998" y="204" width="3" height="3" fill="#eee"/>
<rect x="1002" y="204" width="3" height="3" fill="#fff"/>
<rect x="1006" y="204" width="3" height="3" fill="#ddd"/>
<rect x="998.500" y="231.500" width="7" height="7.500" rx="1.500" fill="#eee" stroke="#111" stroke-width="2"/><path d="M1000 231l-3-5M1002 231l-.5-8M1004 231l3-5" stroke="#222" stroke-width="1.400" fill="none"/><path d="M994.500 223q2.500 0 3.500 4.500q-3 .5-3.500-4.500zM1000.500 222h2l.3 4h-2.600zM1005 227q1.500-4 5-3q0 2.500-3 4z" fill="#333"/>
<circle cx="1001.500" cy="258" r="3.700" fill="url(#clb)"/><circle cx="997.700" cy="262.300" r="3.700" fill="url(#clb)"/><circle cx="1005.300" cy="262.300" r="3.700" fill="url(#clb)"/><path d="M1001.500 260q0 6-3.500 8.500h7q-3.500-2.500-3.500-8.500z" fill="#222"/>
<path d="M993 299.500h17" stroke="#333" stroke-width="1" stroke-dasharray="2 1"/><rect x="993" y="302" width="17" height="1" fill="#333"/><rect x="993" y="305" width="17" height="2" fill="#2a2a2a"/><rect x="993" y="309" width="17" height="3" fill="#2a2a2a"/>
<rect x="993.500" y="329.500" width="16" height="11" fill="url(#gd2)" stroke="#111"/>
<circle cx="998.500" cy="362" r="5.500" fill="url(#tr1)"/><circle cx="1003.500" cy="366.800" r="5.300" fill="#ddd" fill-opacity=".75" stroke="#444" stroke-width=".8"/>
<circle cx="1001.500" cy="409" r="8" fill="#e8e8e8" stroke="#222" stroke-width="1" stroke-dasharray="1.200 1"/><circle cx="1001.500" cy="409" r="5.800" fill="url(#ap)"/>
<rect x="996.500" y="432.500" width="13" height="13" fill="url(#gs)" stroke="#333" stroke-width=".8"/><path d="M997 446h13v-13" fill="none" stroke="#111" stroke-width="1"/><rect x="996" y="442" width="5.500" height="5.500" fill="#888" stroke="#111" stroke-width="1"/><rect x="993.500" y="439.500" width="4.500" height="4.500" fill="#fff" stroke="#111" stroke-width="1"/>
<path d="M1002 481.500l8.500 4.500l-8.500 5l-8.500-5z" fill="#2a2a2a"/><path d="M1002 475.500l8.500 4.500l-8.500 5l-8.500-5z" fill="#f4f4f4" fill-opacity=".85" stroke="#555" stroke-width=".7"/>
<path d="M992.500 504.500h7l3.500 3.500v10h-10.500z" fill="#eee" stroke="#444" stroke-width="1"/><path d="M999.500 504.500v3.500h3.500" fill="none" stroke="#444" stroke-width="1"/><path d="M996.500 510.500h10.500l3.500 3.500v8.500h-14z" fill="#f0f0f0" stroke="#444" stroke-width="1"/><path d="M1007 510.500v3.500h3.500" fill="none" stroke="#444" stroke-width="1"/>
<g stroke="#222" fill="none"><circle cx="1001.500" cy="557.500" r="5" stroke-width="1.500"/><circle cx="1001.500" cy="557.500" r="1.700" fill="#222"/><path d="M1001.500 549v17M993 557.500h17M995.500 551.500l12 12M1007.500 551.500l-12 12" stroke-width="1.100"/></g>
<circle cx="1001.500" cy="587.500" r="8.300" fill="url(#inf)" stroke="#111" stroke-width=".6"/><text x="999" y="593" font-family="Liberation Serif,serif" font-weight="bold" font-size="14" fill="#fff">i</text>
</svg><!--/DOCK-->
<!-- bottom frame + taskbar -->
<div class="a" style="left:4px;top:733px;width:1016px;height:1px;background:#444"></div><div class="a" style="left:1px;top:734px;width:1022px;height:3px;background:#e6e6e6;border-bottom:1px solid #fff;border-top:1px solid #f4f4f4"></div>
<div class="a" style="left:0;top:737px;width:1024px;height:1px;background:#808080"></div>
<div class="a" style="left:0;top:738px;width:1024px;height:30px;background:#d4d0c8"></div><div class="a" style="left:0;top:739px;width:1024px;height:1px;background:#fff"></div>

<div class="a btn" style="left:2px;top:742px;width:47px;height:22px"></div>
<svg class="a" style="left:4px;top:744px" width="17" height="16"><path d="M2.500 1.800q3.500-2 6.500 0l-1.400 5q-3-2-6.400 0z" fill="#f0642c"/><path d="M9.700 2.300q3 2 6 .3l-1.400 5.200q-3 1.700-6-.3z" fill="#74c034"/><path d="M.8 8q3.300-2 6.300 0l-1.400 5q-3-2-6.300 0z" fill="#3c78e0"/><path d="M7.700 8.500q3 2 6 .3l-1.400 5.200q-3 1.700-6-.3z" fill="#f8d028"/></svg>
<div class="t s" style="left:22px;top:745px;font-weight:bold;-webkit-text-stroke:0.45px #000;font-family:'Liberation Sans','WenQuanYi Zen Hei',sans-serif">开始</div>
<svg class="a" style="left:56px;top:745px" width="66" height="19">
 <circle cx="8" cy="8.500" r="7.500" fill="#fff" stroke="#888" stroke-width=".5"/><path d="M8 8.500V1A7.500 7.500 0 0 0 .5 8.500z" fill="#e8542c"/><path d="M8 8.500h7.500A7.500 7.500 0 0 0 8 1z" fill="#5cb040"/><path d="M8 8.500v7.500a7.500 7.500 0 0 0 7.500-7.500z" fill="#f0c020"/><path d="M8 8.500h-7.500a7.500 7.500 0 0 0 7.500 7.500z" fill="#3c7cd8"/><circle cx="8" cy="8.500" r="4.300" fill="#fff"/><path d="M6.300 5.500v6l5-3z" fill="#222"/>
 <rect x="24.500" y="2.500" width="13" height="13" rx="2" fill="#3a86d8" stroke="#1c5cb0"/><rect x="27" y="5" width="8" height="9" fill="#fff"/><path d="M29 11l4-5l1.500 1l-4 5l-2 .5z" fill="#f4e8a0" stroke="#555" stroke-width=".6"/><circle cx="37" cy="4" r="1.300" fill="#e04020"/>
 <text x="46.500" y="15.500" font-family="Liberation Sans,sans-serif" font-weight="bold" font-size="23" fill="#2c8ce0" textLength="15" lengthAdjust="spacingAndGlyphs">e</text><path d="M48 13.500q-3 3.500 1.500 2.500q7-2 11-7.500q3-5-2-4" fill="none" stroke="#58a8e8" stroke-width="1.400"/>
</svg>
<div class="t" style="left:130px;top:742px;font-size:15px;font-weight:bold">»</div>
<div class="a" style="left:144px;top:742px;width:159px;height:22px;border:1px solid;border-color:#404040 #fff #fff #404040;box-shadow:inset 1px 1px 0 #808080;background-color:#fff;background-image:conic-gradient(#d4d0c8 25%,#fff 0 50%,#d4d0c8 0 75%,#fff 0);background-size:2px 2px"></div>
<div class="a" style="left:148px;top:746px;width:16px;height:16px;background:linear-gradient(#f09018,#c86400);border:1px solid #8c4400"></div>
<div class="t" style="left:151px;top:747px;font-size:11px;font-weight:bold;color:#ffd860;letter-spacing:-0.3px">Ai</div>
<div class="t s" style="left:168px;top:747px">未标题<span class="l">-1* @ 68% (CM...</span></div>
<svg class="a" style="left:957px;top:747px" width="18" height="15"><path d="M5 4q0-3 1.500-2t1.500 1t1.500-1t1.500 1t1.500-1t1.500 1v2" fill="none" stroke="#000" stroke-width=".9"/><rect x="1" y="5" width="16" height="9" rx="1.500" fill="#fff" stroke="#000" stroke-width="1.300"/><path d="M3 8h12M3 10.500h12" stroke="#000" stroke-width="1.200" stroke-dasharray="1.200 .8"/></svg>
<div class="a" style="left:978px;top:743px;width:2px;height:22px;border-left:1px solid #808080;border-right:1px solid #fff"></div>
<div class="a" style="left:985px;top:742px;width:37px;height:24px;border:1px solid;border-color:#808080 #fff #fff #808080"></div>
<div class="t" style="left:990px;top:746px;font-size:15px;font-weight:bold">«</div>
<svg class="a" style="left:1003px;top:744px" width="20" height="20"><rect x="1.500" y="5.500" width="9" height="7" fill="#2c3470" stroke="#4458c0"/><path d="M3 13h6l1.500 3.500h-9z" fill="#dce4ff" stroke="#4458c0" stroke-width=".8"/><path d="M12 4q2 3 0 6M14.500 2.500q3 4.500 0 9" fill="none" stroke="#555" stroke-width=".9"/></svg>

</body></html>
